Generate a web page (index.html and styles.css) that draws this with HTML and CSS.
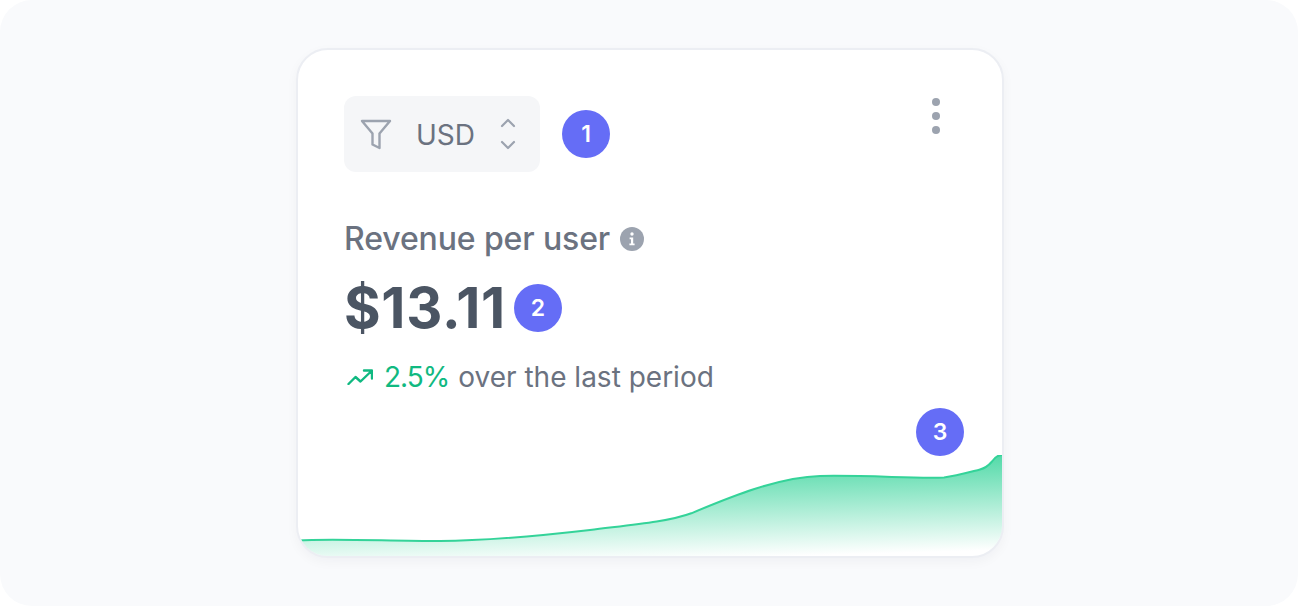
FILE: index.html
```html
<!DOCTYPE html>
<html lang="en">
<head>
<meta charset="utf-8">
<title>Revenue per user</title>
<link rel="stylesheet" href="styles.css">
</head>
<body>
<main class="frame">
  <section class="card">
    <header class="top">
      <div class="filter">
        <div class="select">
          <svg class="funnel" viewBox="0 0 32 32" width="32" height="32" fill="none" stroke="#9ca3af" stroke-width="2.4" stroke-linejoin="round"><path d="M2 3h28L19.5 15.5V30L12.5 26.5V15.5Z"/></svg>
          <span class="currency">USD</span>
          <svg class="updown" viewBox="0 0 16 32" width="16" height="32" fill="none" stroke="#9ca3af" stroke-width="2.2" stroke-linecap="round" stroke-linejoin="round"><path d="M2 8l6-6 6 6M2 24l6 6 6-6"/></svg>
        </div>
        <span class="badge">1</span>
      </div>
      <svg class="more" viewBox="0 0 8 38" width="8" height="38" fill="#9ca3af"><circle cx="4" cy="4" r="4"/><circle cx="4" cy="18" r="4"/><circle cx="4" cy="32" r="4"/></svg>
    </header>
    <div class="label">
      <span>Revenue per user</span>
      <svg class="info" viewBox="0 0 24 24" width="24" height="24"><circle cx="12" cy="12" r="12" fill="#9ca3af"/><circle cx="12" cy="7" r="1.7" fill="#fff"/><path d="M9.6 10.6h3.6v6h1.4v1.6H9.4v-1.6h1.6v-4.4H9.6Z" fill="#fff"/></svg>
    </div>
    <div class="value">
      <span class="amount">$13.11</span>
      <span class="badge">2</span>
    </div>
    <div class="delta">
      <svg class="trend" viewBox="0 0 26 16" width="26" height="16" fill="none" stroke="#10b981" stroke-width="2.4" stroke-linecap="round" stroke-linejoin="round"><path d="M1.5 15l7-7 5 4.5L24.5 2M17 1.5h8v8"/></svg>
      <span class="pct">2.5%</span>
      <span class="rest">over the last period</span>
    </div>
    <span class="badge badge-chart">3</span>
    <svg class="chart" viewBox="0 0 704 101" width="704" height="101" preserveAspectRatio="none">
      <defs>
        <linearGradient id="fill" gradientUnits="userSpaceOnUse" x1="704" y1="0" x2="706.6" y2="95">
          <stop offset="0" stop-color="#34d399" stop-opacity=".85"/>
          <stop offset="1" stop-color="#34d399" stop-opacity="0"/>
        </linearGradient>
      </defs>
      <path fill="url(#fill)" d="M0 85.500C30 83 90 86 142 86C190 86 240 81 292 75C332 70 370 67 394 58C430 43 480 22 522 21C570 20 620 24 646 22.500C658 21 672 17 682 14.500C688 13 691 10 694 6.500C697 2 700 0 704 0V101H0Z"/>
      <path fill="none" stroke="#34d399" stroke-width="2" d="M0 85.500C30 83 90 86 142 86C190 86 240 81 292 75C332 70 370 67 394 58C430 43 480 22 522 21C570 20 620 24 646 22.500C658 21 672 17 682 14.500C688 13 691 10 694 6.500C697 2 700 0 704 0"/>
    </svg>
  </section>
</main>
</body>
</html>
```
FILE: styles.css
```css
* { box-sizing: border-box; }
html, body { margin: 0; background: #fff; }
body { font-family: Inter, "Liberation Sans", sans-serif; }
.frame {
  width: 1298px;
  height: 606px;
  background: #f9fafc;
  border-radius: 32px;
  padding: 48px 0 0 296px;
  display: flex;
  overflow: hidden;
}
.card {
  position: relative;
  width: 708px;
  height: 510px;
  background: #fff;
  border: 2px solid #eceef3;
  border-radius: 32px;
  padding: 46px 46px 0;
  box-shadow: 0 4px 12px rgba(17, 24, 39, .04);
  overflow: hidden;
}
.top {
  display: flex;
  justify-content: space-between;
  align-items: flex-start;
}
.filter { display: flex; align-items: center; gap: 22px; }
.select {
  width: 196px;
  height: 76px;
  display: flex;
  align-items: center;
  padding: 0 16px;
  background: #f5f6f8;
  border-radius: 12px;
}
.funnel { flex: none; }
.currency {
  margin: 2px 0 0 24px;
  font-size: 28px;
  line-height: 32px;
  color: #6b7280;
}
.updown { margin-left: auto; margin-right: 8px; flex: none; }
.more { margin: 2px 16px 0 0; }
.badge {
  flex: none;
  width: 48px;
  height: 48px;
  display: flex;
  align-items: center;
  justify-content: center;
  border-radius: 50%;
  background: #656df6;
  color: #fff;
  font-size: 23px;
  font-weight: 600;
}
.label {
  display: flex;
  align-items: center;
  gap: 10px;
  margin-top: 48px;
  height: 38px;
  font-size: 32px;
  line-height: 38px;
  font-weight: 500;
  letter-spacing: -.12px;
  color: #6b7280;
}
.value {
  display: flex;
  align-items: center;
  gap: 8px;
  margin-top: 26px;
  height: 48px;
}
.amount {
  font-size: 56px;
  line-height: 48px;
  font-weight: 700;
  letter-spacing: .7px;
  color: #4b5563;
}
.delta {
  display: flex;
  align-items: center;
  margin-top: 26px;
  height: 38px;
  font-size: 28px;
  line-height: 38px;
}
.trend { flex: none; margin: 0 11px 0 3px; }
.pct { color: #10b981; font-weight: 400; letter-spacing: -1px; margin-right: 9px; }
.rest { color: #6b7280; }
.badge-chart { position: absolute; left: 618px; top: 358px; }
.chart { position: absolute; left: 0; bottom: 0; display: block; }
```
